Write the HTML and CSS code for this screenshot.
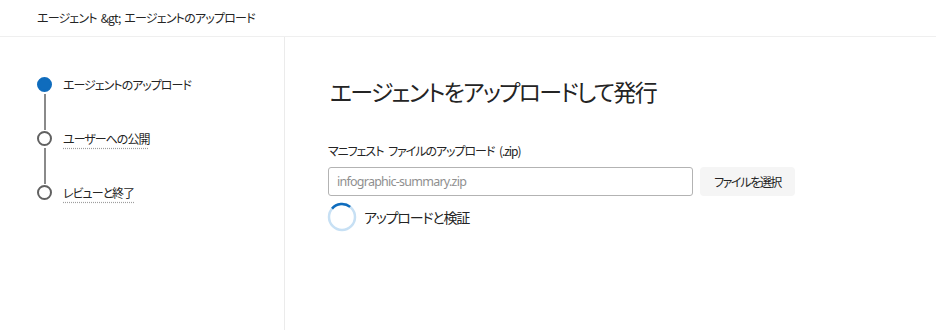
FILE: index.html
```html
<!DOCTYPE html>
<html lang="ja">
<head>
<meta charset="utf-8">
<title>エージェントのアップロード</title>
<link rel="stylesheet" href="styles.css">
</head>
<body>
<div class="app">
  <header class="header">
    <span class="breadcrumb">エージェント &amp;gt; エージェントのアップロード</span>
  </header>
  <div class="main">
    <nav class="steps">
      <div class="step">
        <div class="track">
          <span class="dot dot-active"></span>
          <span class="line"></span>
        </div>
        <span class="step-label">エージェントのアップロード</span>
      </div>
      <div class="step">
        <div class="track">
          <span class="dot"></span>
          <span class="line"></span>
        </div>
        <span class="step-label step-link">ユーザーへの公開</span>
      </div>
      <div class="step step-last">
        <div class="track">
          <span class="dot"></span>
        </div>
        <span class="step-label step-link">レビューと終了</span>
      </div>
    </nav>
    <section class="content">
      <h1 class="title">エージェントをアップロードして発行</h1>
      <label class="field-label" for="file">マニフェスト ファイルのアップロード (.zip)</label>
      <div class="file-row">
        <input class="file-input" id="file" type="text" placeholder="infographic-summary.zip">
        <button class="file-btn" type="button">ファイルを選択</button>
      </div>
      <div class="status">
        <svg class="spinner" width="30" height="30" viewBox="0 0 30 30">
          <circle cx="15" cy="15" r="13" fill="none" stroke="#c7e0f4" stroke-width="2.5"/>
          <circle cx="15" cy="15" r="13" fill="none" stroke="#0f6cbd" stroke-width="2.5" stroke-dasharray="20 62" transform="rotate(-140 15 15)"/>
        </svg>
        <span class="status-text">アップロードと検証</span>
      </div>
    </section>
  </div>
</div>
</body>
</html>
```

FILE: styles.css
```css
* { box-sizing: border-box; }
html, body { margin: 0; padding: 0; background: #ffffff; }
body {
  font-family: "Noto Sans CJK JP", "Noto Sans", sans-serif;
  font-feature-settings: "palt";
  color: #242424;
}
.app { width: 936px; height: 330px; display: flex; flex-direction: column; }
.header {
  height: 37px;
  border-bottom: 1px solid #efefef;
  padding-left: 37px;
  display: flex;
  align-items: center;
}
.breadcrumb { font-size: 12px; line-height: 18px; letter-spacing: -0.8px; word-spacing: 2px; color: #242424; margin-top: -1px; }
.main { flex: 1; display: flex; }
.steps {
  width: 285px;
  border-right: 1px solid #ebebeb;
  padding: 40px 0 0 37px;
  display: flex;
  flex-direction: column;
}
.step { display: flex; gap: 11px; height: 54px; }
.step-last { height: auto; }
.track { width: 15px; display: flex; flex-direction: column; align-items: center; }
.dot {
  width: 15px; height: 15px; border-radius: 50%;
  border: 2px solid #616161; background: #fff; flex: none;
}
.dot-active { background: #0f6cbd; border-color: #0f6cbd; }
.line { width: 2px; flex: 1; background: #8a8a8a; margin: 2px 0 1px; }
.step-label { font-size: 12px; line-height: 15px; letter-spacing: -1px; color: #242424; }
.step-link {
  text-decoration: underline dotted #9e9e9e;
  text-underline-offset: 4px;
}
.content { flex: 1; padding: 38px 0 0 45px; display: flex; flex-direction: column; align-items: flex-start; }
.title { margin: 0; font-size: 23px; font-weight: 400; line-height: 32px; letter-spacing: -1.7px; color: #242424; }
.field-label { margin-top: 35px; font-size: 12px; line-height: 18px; letter-spacing: -1.05px; word-spacing: 3px; color: #242424; margin-left: -2px; }
.file-row { margin-top: 7px; display: flex; gap: 7px; margin-left: -2px; }
.file-input {
  width: 365px; height: 29px;
  border: 1px solid #b3b3b3; border-radius: 3px;
  padding: 0 8px;
  font-family: "Noto Sans", sans-serif;
  font-size: 12.5px; letter-spacing: -0.75px; color: #242424;
  outline: none;
}
.file-input::placeholder { color: #8f8f8f; font-family: "Noto Sans", sans-serif; font-size: 12.5px; letter-spacing: -0.75px; }
.file-btn {
  width: 95px; height: 29px;
  border: none; border-radius: 4px; background: #f5f5f5;
  font-family: "Noto Sans CJK JP", sans-serif; font-feature-settings: "palt";
  font-size: 12px; letter-spacing: -1.4px; color: #242424; padding: 0;
}
.status { margin-top: 6px; display: flex; align-items: center; gap: 7px; margin-left: -3px; }
.spinner { flex: none; }
.status-text { font-size: 14px; line-height: 20px; letter-spacing: -1.2px; color: #242424; }
```
